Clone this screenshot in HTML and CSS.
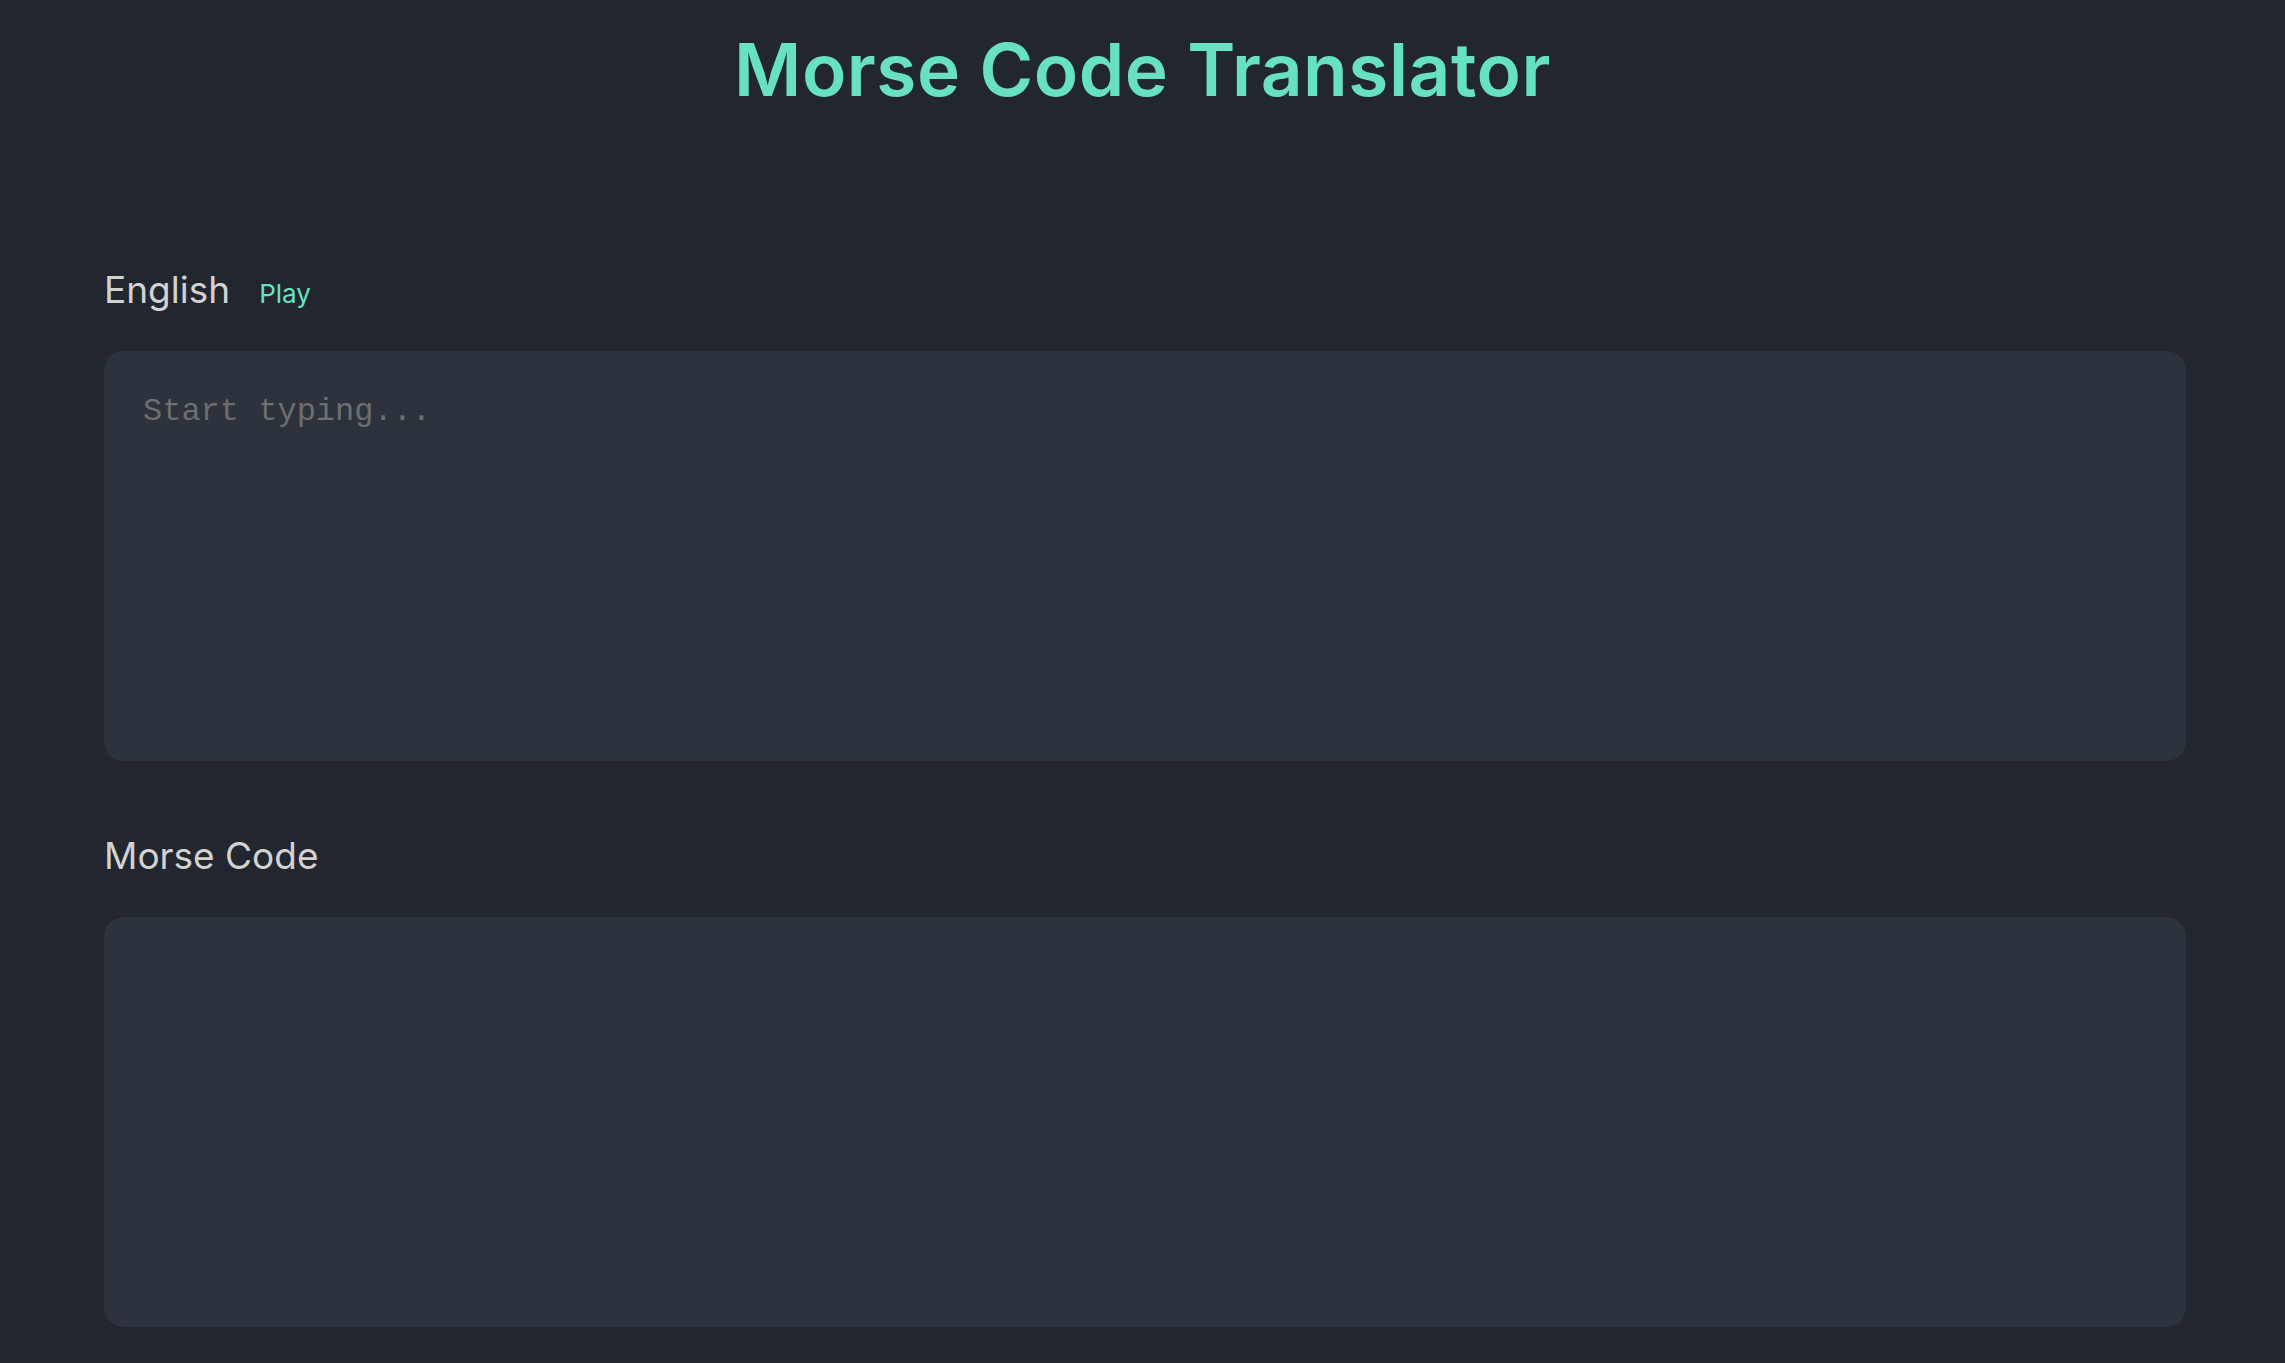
FILE: index.html
```html
<!DOCTYPE html>
<html lang="en">
<head>
<meta charset="utf-8">
<title>Morse Code Translator</title>
<link rel="stylesheet" href="styles.css">
</head>
<body>
<h1 class="title">Morse Code Translator</h1>
<main class="container">
  <section class="panel">
    <div class="panel-head">
      <label class="panel-label" for="english">English</label>
      <button class="play-btn" type="button">Play</button>
    </div>
    <textarea id="english" class="text-box" placeholder="Start typing..."></textarea>
  </section>
  <section class="panel panel-morse">
    <div class="panel-head">
      <label class="panel-label" for="morse">Morse Code</label>
    </div>
    <textarea id="morse" class="text-box" readonly></textarea>
  </section>
</main>
</body>
</html>
```

FILE: styles.css
```css
html, body {
  margin: 0;
  padding: 0;
}

body {
  background: #22262f;
  font-family: "Inter", "Noto Sans", sans-serif;
  min-height: 100vh;
}

.title {
  margin: 0;
  padding-top: 20px;
  font-size: 73px;
  font-weight: 600;
  line-height: 100px;
  color: #68e1c2;
  text-align: center;
  letter-spacing: 0.5px;
}

.container {
  padding: 0 99px 0 104px;
}

.panel {
  margin-top: 145px;
}

.panel-morse {
  margin-top: 70px;
}

.panel-head {
  display: flex;
  align-items: baseline;
  gap: 29px;
  height: 50px;
  line-height: 50px;
  margin-bottom: 36px;
}

.panel-label {
  font-size: 37px;
  font-weight: 400;
  color: #d2d2d2;
}

.play-btn {
  background: none;
  border: none;
  padding: 0;
  font-family: inherit;
  font-size: 26px;
  color: #68e1c2;
  cursor: pointer;
}

.text-box {
  display: block;
  box-sizing: border-box;
  width: 100%;
  height: 410px;
  margin: 0;
  padding: 42px 39px;
  border: none;
  border-radius: 20px;
  background: #2c333d;
  color: #d2d2d2;
  font-family: "Liberation Mono", monospace;
  font-size: 32px;
  line-height: normal;
  resize: none;
  outline: none;
}

.text-box::placeholder {
  color: #6e6e6e;
  opacity: 1;
}
```
